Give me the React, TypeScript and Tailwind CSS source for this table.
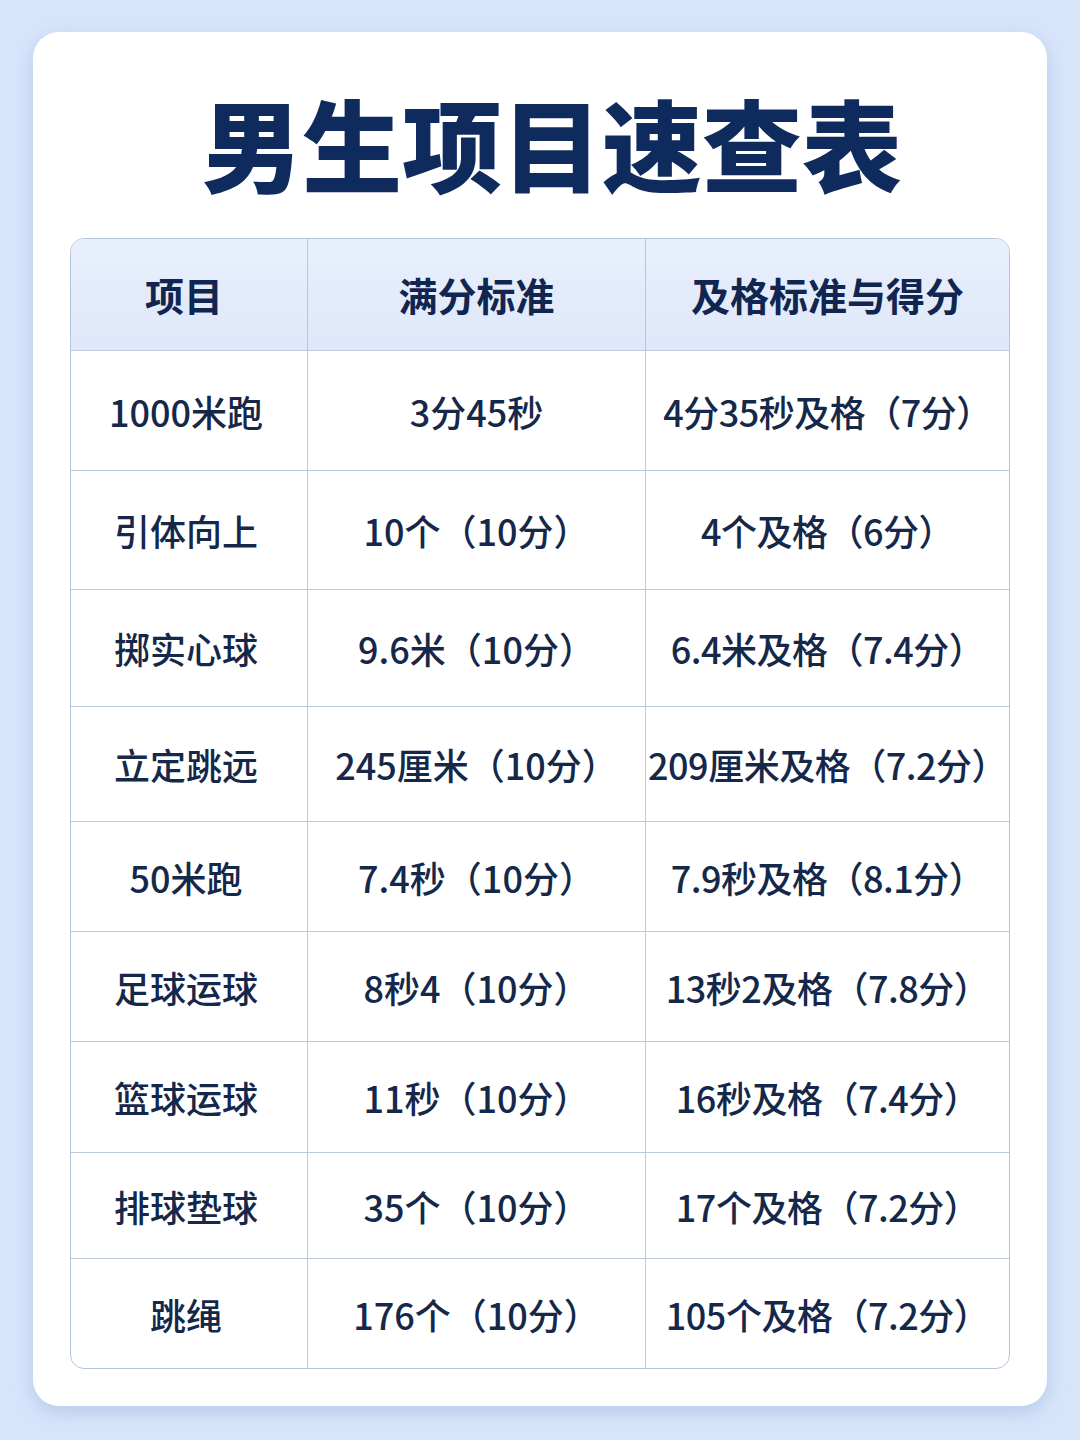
const rows = [
  { name: '1000米跑', full: '3分45秒', pass: '4分35秒及格（7分）', h: 'h-[120px]' },
  { name: '引体向上', full: '10个（10分）', pass: '4个及格（6分）', h: 'h-[119px]' },
  { name: '掷实心球', full: '9.6米（10分）', pass: '6.4米及格（7.4分）', h: 'h-[117px]' },
  { name: '立定跳远', full: '245厘米（10分）', pass: '209厘米及格（7.2分）', h: 'h-[115px]' },
  { name: '50米跑', full: '7.4秒（10分）', pass: '7.9秒及格（8.1分）', h: 'h-[110px]' },
  { name: '足球运球', full: '8秒4（10分）', pass: '13秒2及格（7.8分）', h: 'h-[110px]' },
  { name: '篮球运球', full: '11秒（10分）', pass: '16秒及格（7.4分）', h: 'h-[111px]' },
  { name: '排球垫球', full: '35个（10分）', pass: '17个及格（7.2分）', h: 'h-[106px]' },
  { name: '跳绳', full: '176个（10分）', pass: '105个及格（7.2分）', h: 'h-[110px]' },
]

const cols = 'grid grid-cols-[236px_338px_1fr]'

export default function App() {
  return (
    <div className="min-h-[1440px] w-[1080px] bg-[#d7e5fb] px-[33px] pt-[32px] pb-[34px] font-['Noto_Sans_CJK_SC','Noto_Sans',sans-serif]">
      <div className="flex h-[1374px] flex-col rounded-[26px] bg-white px-[37px] shadow-[0_6px_18px_rgba(120,150,200,0.35)]">
        <div className="h-[206px] pt-[60px] pl-[24px] text-center">
          <h1 className="text-[100px] leading-none font-black text-[#0f2b5e]">
            男生项目速查表
          </h1>
        </div>

        <div className="overflow-hidden rounded-[14px] border border-[#b7c5dc] text-[#15284a]">
          <div className={`${cols} h-[111px] bg-gradient-to-b from-[#e8effc] to-[#dfe8fa] text-[39px] font-bold text-[#10254f]`}>
            <div className="flex items-center justify-center pr-[10px]">项目</div>
            <div className="flex items-center justify-center border-l border-[#b7c5dc]">满分标准</div>
            <div className="flex items-center justify-center border-l border-[#b7c5dc]">及格标准与得分</div>
          </div>

          {rows.map((r) => (
            <div key={r.name} className={`${cols} ${r.h} border-t border-[#bccadf] text-[36px] font-medium`}>
              <div className="flex items-center justify-center pr-[6px]">{r.name}</div>
              <div className="flex items-center justify-center border-l border-[#bccadf]">{r.full}</div>
              <div className="flex items-center justify-center border-l border-[#bccadf] whitespace-nowrap tracking-[-0.5px]">{r.pass}</div>
            </div>
          ))}
        </div>
      </div>
    </div>
  )
}
